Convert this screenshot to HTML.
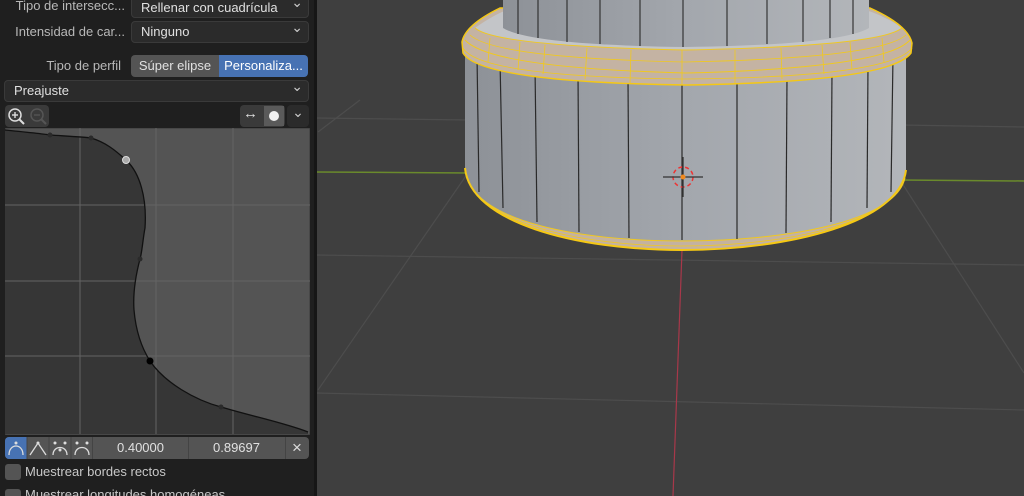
<!DOCTYPE html>
<html style="width:1024px;height:496px;overflow:hidden"><head><meta charset="utf-8"><style>
*{margin:0;padding:0;box-sizing:border-box}
body{width:1024px;height:496px;overflow:hidden;background:#3f3f3f;font-family:"Liberation Sans",sans-serif;font-size:13px;color:#d0d0d0;position:relative}
#panel{position:absolute;left:0;top:0;width:317px;height:496px;background:#1f1f1f;border-right:3px solid #161616;overflow:hidden}
.a{position:absolute}
.dd{position:absolute;background:#2b2b2b;border:1px solid #3a3a3a;border-radius:4px;color:#e0e0e0;padding-left:9px;line-height:20px}
.dd:after{content:"⌄";position:absolute;right:5px;top:-5px;color:#ccc;font-size:14px}
.lbl{position:absolute;color:#b8b8b8;text-align:right}
</style></head><body>
<svg class="a" style="left:0;top:0" width="1024" height="496">
<g stroke="#4d4d4d" stroke-width="1.2" fill="none">
<line x1="316" y1="118" x2="470" y2="120"/><line x1="900" y1="125" x2="1024" y2="127"/>
<line x1="316" y1="255" x2="1024" y2="265"/><line x1="316" y1="393" x2="1024" y2="410"/>
<line x1="318" y1="390" x2="470" y2="170"/><line x1="318" y1="132" x2="360" y2="100"/>
<line x1="900" y1="180" x2="1024" y2="373"/>
</g>
<line x1="316" y1="172" x2="470" y2="173" stroke="#6a8a2c" stroke-width="1.5"/>
<line x1="900" y1="180" x2="1024" y2="181" stroke="#6a8a2c" stroke-width="1.5"/>
<line x1="682" y1="250" x2="673" y2="496" stroke="#a8384a" stroke-width="1.2"/>
<defs><linearGradient id="g" x1="0" x2="1"><stop offset="0" stop-color="#8d9197"/><stop offset=".5" stop-color="#a3a7ad"/><stop offset="1" stop-color="#b3b6ba"/></linearGradient></defs>
<!-- lower cylinder -->
<path d="M465,50 L906,50 L906,170 C900,222 790,250 682,250 C575,250 470,222 465,168 Z" fill="url(#g)"/>
<path d="M467,176 C478,222 580,241 682,241 C785,241 895,222 905,178 L906,170 C900,222 790,250 682,250 C575,250 470,222 465,168Z" fill="#c4b2a0"/>
<path d="M465,168 C470,222 575,250 682,250 C790,250 900,222 906,170" fill="none" stroke="#f5c814" stroke-width="2"/>
<path d="M467,176 C478,222 580,241 682,241 C785,241 895,222 905,178" fill="none" stroke="#f0c820" stroke-width="1"/>
<path d="M466,172 C474,222 578,246 682,246 C788,246 898,222 905,174" fill="none" stroke="#f0c820" stroke-width="0.8"/>
<g stroke="#2a2a2a" stroke-width="1.2">
<line x1="477" y1="55" x2="479" y2="192"/><line x1="500" y1="60" x2="503" y2="208"/><line x1="535" y1="66" x2="537" y2="222"/><line x1="578" y1="72" x2="579" y2="232"/><line x1="628" y1="78" x2="629" y2="238"/><line x1="682" y1="84" x2="682" y2="240"/><line x1="737" y1="82" x2="737" y2="239"/><line x1="787" y1="78" x2="786" y2="233"/><line x1="832" y1="72" x2="831" y2="222"/><line x1="868" y1="64" x2="867" y2="208"/><line x1="893" y1="56" x2="891" y2="192"/>
</g>
<!-- ring -->
<path d="M462,42 Q465,25 500,8 L870,8 Q908,25 912,43 L911,53 Q890,82 686,85 Q480,82 463,53 Z" fill="#c4b3a3"/>
<path d="M475,28 Q500,10 520,6 L850,6 Q880,12 902,28 Q880,46 686,50 Q495,46 475,28Z" fill="#c3c5c8"/>
<path d="M462,42 Q465,25 500,8 L870,8 Q908,25 912,43 L911,53 Q890,82 686,85 Q480,82 463,53 Z" fill="none" stroke="#f5c814" stroke-width="1.5"/>
<path d="M463,48 Q480,77 686,79 Q890,77 912,48" fill="none" stroke="#f0c820" stroke-width="0.8"/>
<path d="M465,40 Q490,68 686,73 Q885,68 910,40" fill="none" stroke="#f0c820" stroke-width="1"/>
<path d="M470,35 Q495,58 686,62 Q880,58 906,35" fill="none" stroke="#f0c820" stroke-width="0.8"/>
<path d="M475,28 Q495,46 686,50 Q880,46 902,28" fill="none" stroke="#f0c820" stroke-width="1"/>
<g stroke="#f0c820" stroke-width="0.8">
<line x1="490" y1="38" x2="488" y2="62"/><line x1="520" y1="42" x2="518" y2="70"/><line x1="545" y1="45" x2="543" y2="74"/><line x1="587" y1="48" x2="585" y2="79"/><line x1="631" y1="50" x2="630" y2="83"/><line x1="682" y1="50" x2="682" y2="84"/><line x1="735" y1="50" x2="735" y2="83"/><line x1="781" y1="48" x2="782" y2="79"/><line x1="822" y1="45" x2="824" y2="74"/><line x1="850" y1="42" x2="852" y2="70"/><line x1="882" y1="38" x2="884" y2="62"/>
</g>
<!-- upper column -->
<path d="M503,0 L869,0 L869,28 Q840,45 686,47 Q530,45 503,28 Z" fill="url(#g)"/>
<g stroke="#2a2a2a" stroke-width="1.1">
<line x1="518" y1="0" x2="518" y2="34"/><line x1="538" y1="0" x2="538" y2="38"/><line x1="567" y1="0" x2="567" y2="42"/><line x1="600" y1="0" x2="600" y2="44"/><line x1="640" y1="0" x2="640" y2="46"/><line x1="683" y1="0" x2="683" y2="47"/><line x1="727" y1="0" x2="727" y2="46"/><line x1="767" y1="0" x2="767" y2="44"/><line x1="803" y1="0" x2="803" y2="42"/><line x1="830" y1="0" x2="830" y2="38"/><line x1="853" y1="0" x2="853" y2="34"/>
</g>
<!-- cursor -->
<circle cx="683" cy="177" r="10" fill="none" stroke="#e33" stroke-width="1.5" stroke-dasharray="4 3"/>
<line x1="663" y1="177" x2="703" y2="177" stroke="#333" stroke-width="1.3"/>
<line x1="683" y1="157" x2="683" y2="197" stroke="#333" stroke-width="1.3"/>
<circle cx="683" cy="177" r="2.5" fill="#f08a20"/>
</svg>
<div id="panel">
<div class="lbl" style="left:0;top:-2px;width:125px">Tipo de intersecc...</div>
<div class="dd" style="left:131px;top:-4px;width:178px;height:22px;line-height:21px">Rellenar con cuadrícula</div>
<div class="lbl" style="left:0;top:24px;width:125px">Intensidad de car...</div>
<div class="dd" style="left:131px;top:21px;width:178px;height:22px">Ninguno</div>
<div class="lbl" style="left:0;top:58px;width:121px">Tipo de perfil</div>
<div class="a" style="left:131px;top:55px;width:88px;height:22px;background:#545454;border-radius:4px 0 0 4px;line-height:22px;text-align:center;color:#e0e0e0">Súper elipse</div>
<div class="a" style="left:219px;top:55px;width:89px;height:22px;background:#4772b3;border-radius:0 4px 4px 0;line-height:22px;text-align:center;color:#fff">Personaliza...</div>
<div class="dd" style="left:4px;top:80px;width:305px;height:22px">Preajuste</div>
<div class="a" style="left:5px;top:105px;width:44px;height:22px;background:#3a3a3a;border-radius:4px"></div>
<svg class="a" style="left:5px;top:105px" width="44" height="22"><circle cx="10" cy="10" r="6" fill="none" stroke="#ddd" stroke-width="1.5"/><line x1="14" y1="14" x2="19" y2="19" stroke="#ddd" stroke-width="2"/><line x1="7" y1="10" x2="13" y2="10" stroke="#ddd" stroke-width="1.4"/><line x1="10" y1="7" x2="10" y2="13" stroke="#ddd" stroke-width="1.4"/><circle cx="32" cy="10" r="6" fill="none" stroke="#555" stroke-width="1.5"/><line x1="36" y1="14" x2="41" y2="19" stroke="#555" stroke-width="2"/><line x1="29" y1="10" x2="35" y2="10" stroke="#555" stroke-width="1.4"/></svg>
<div class="a" style="left:240px;top:105px;width:45px;height:22px;background:#3a3a3a;border-radius:4px"></div>
<div class="a" style="left:264px;top:106px;width:20px;height:20px;background:#5a5a5a"></div>
<div class="a" style="left:269px;top:111px;width:10px;height:10px;background:#f0f0f0;border-radius:50%"></div>
<div class="a" style="left:243px;top:105px;color:#ddd;font-size:15px">↔</div>
<div class="a" style="left:287px;top:105px;width:22px;height:22px;background:#2b2b2b;border-radius:4px;color:#ccc;text-align:center;font-size:14px;line-height:14px">⌄</div>
<svg class="a" style="left:5px;top:128px" width="305" height="307">
<rect x="0" y="0" width="305" height="307" fill="#545454" stroke="#3a3a3a"/>
<path d="M0,2 C20,4 40,6 45,7 C60,8 80,9 86,10 C100,14 110,22 121,32 C135,45 142,70 140,100 C138,110 137,125 135,131 C130,150 128,168 129,182 C131,205 138,222 145,233 C160,255 190,272 216,279 C250,289 280,295 303,304 L303,306 L0,306Z" fill="#363636"/>
<g stroke="#646464" stroke-width="1"><line x1="75" y1="0" x2="75" y2="306"/><line x1="151" y1="0" x2="151" y2="306"/><line x1="228" y1="0" x2="228" y2="306"/><line x1="0" y1="77" x2="305" y2="77"/><line x1="0" y1="153" x2="305" y2="153"/><line x1="0" y1="228" x2="305" y2="228"/></g>
<path d="M0,2 C20,4 40,6 45,7 C60,8 80,9 86,10 C100,14 110,22 121,32 C135,45 142,70 140,100 C138,110 137,125 135,131 C130,150 128,168 129,182 C131,205 138,222 145,233 C160,255 190,272 216,279 C250,289 280,295 303,304" fill="none" stroke="#111" stroke-width="1.3"/>
<g fill="#2a2a2a"><circle cx="45" cy="7" r="2.5"/><circle cx="86" cy="10" r="2.5"/><circle cx="135" cy="131" r="2.5"/><circle cx="216" cy="279" r="2.5"/></g>
<circle cx="121" cy="32" r="3.5" fill="#aaa" stroke="#ddd"/><circle cx="145" cy="233" r="3.5" fill="#000"/>
</svg>
<div class="a" style="left:5px;top:437px;width:304px;height:22px;background:#545454;border-radius:4px"></div>
<div class="a" style="left:5px;top:437px;width:22px;height:22px;background:#4772b3;border-radius:4px 0 0 4px"></div>
<svg class="a" style="left:5px;top:437px" width="92" height="22"><g fill="none" stroke="#ddd" stroke-width="1.3"><path d="M4,18 C4,6 18,6 18,18"/><path d="M25,18 L33,6 L41,18"/><path d="M48,18 C48,8 62,8 62,18"/><path d="M70,18 C70,8 84,8 84,18"/></g><g fill="#ddd"><circle cx="11" cy="6" r="1.5"/><circle cx="33" cy="6" r="1.5"/><circle cx="50" cy="6" r="1.5"/><circle cx="60" cy="6" r="1.5"/><circle cx="55" cy="13" r="1.5"/><circle cx="72" cy="6" r="1.5"/><circle cx="82" cy="6" r="1.5"/></g><g stroke="#444"><line x1="22" y1="0" x2="22" y2="22"/><line x1="44" y1="0" x2="44" y2="22"/><line x1="66" y1="0" x2="66" y2="22"/></g></svg>
<div class="a" style="left:92px;top:437px;width:1px;height:22px;background:#444"></div>
<div class="a" style="left:93px;top:440px;width:95px;text-align:center;color:#e0e0e0">0.40000</div>
<div class="a" style="left:188px;top:437px;width:1px;height:22px;background:#444"></div>
<div class="a" style="left:189px;top:440px;width:95px;text-align:center;color:#e0e0e0">0.89697</div>
<div class="a" style="left:285px;top:437px;width:1px;height:22px;background:#444"></div>
<div class="a" style="left:285px;top:437px;width:24px;text-align:center;color:#ddd;font-size:17px;line-height:22px">×</div>
<div class="a" style="left:5px;top:464px;width:16px;height:16px;background:#545454;border-radius:3px"></div>
<div class="a" style="left:25px;top:464px;color:#c8c8c8">Muestrear bordes rectos</div>
<div class="a" style="left:5px;top:489px;width:16px;height:16px;background:#545454;border-radius:3px"></div>
<div class="a" style="left:25px;top:487px;color:#c8c8c8">Muestrear longitudes homogéneas</div>
</div>
</body></html>
